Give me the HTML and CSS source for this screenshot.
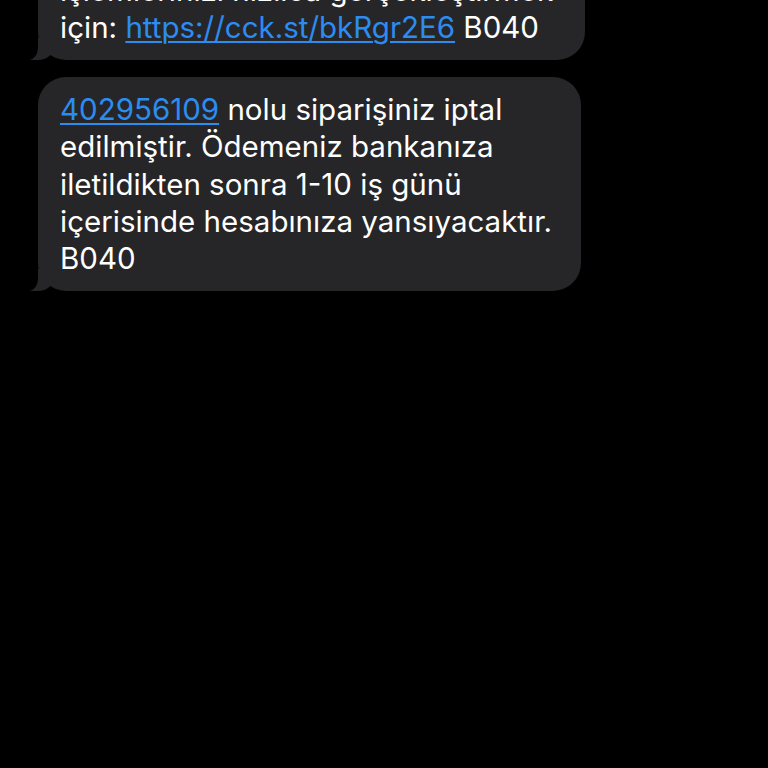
FILE: index.html
```html
<!DOCTYPE html>
<html lang="tr">
<head>
<meta charset="utf-8">
<link rel="stylesheet" href="styles.css">
</head>
<body>
<div class="thread">
  <div class="bubble bubble-first">
    <p>işlemlerinizi hızlıca gerçekleştirmek için: <a href="#">https://cck.st/bkRgr2E6</a> B040</p>
  </div>
  <div class="bubble bubble-second">
    <p><a href="#">402956109</a> nolu siparişiniz iptal edilmiştir. Ödemeniz bankanıza iletildikten sonra 1-10 iş günü içerisinde hesabınıza yansıyacaktır. B040</p>
  </div>
</div>
</body>
</html>
```
FILE: styles.css
```css
html, body {
  margin: 0;
  padding: 0;
  background: #000;
  height: 100%;
  overflow: hidden;
}
.thread {
  display: flex;
  flex-direction: column;
  align-items: flex-start;
  gap: 17px;
  padding-left: 38px;
  margin-top: -42px;
  font-family: "Inter", "Liberation Sans", sans-serif;
}
.bubble {
  position: relative;
  background: #262628;
  border-radius: 28px;
  padding: 14px 20px 13px 22px;
  box-sizing: border-box;
  color: #fff;
}
.bubble p {
  margin: 0;
  font-size: 29.5px;
  line-height: 37.4px;
  letter-spacing: 0;
}
.bubble a {
  color: #2d8cf0;
  text-decoration: underline;
  text-decoration-thickness: 2px;
  text-underline-offset: 3px;
}
.bubble-first { width: 547px; }
.bubble-second { width: 543px; }
.bubble::before {
  content: "";
  position: absolute;
  left: -8px;
  bottom: 0;
  width: 24px;
  height: 22px;
  background: #262628;
  border-bottom-right-radius: 16px 14px;
}
.bubble::after {
  content: "";
  position: absolute;
  left: -12px;
  bottom: 0;
  width: 12px;
  height: 24px;
  background: #000;
  border-bottom-right-radius: 10px 12px;
}
```
